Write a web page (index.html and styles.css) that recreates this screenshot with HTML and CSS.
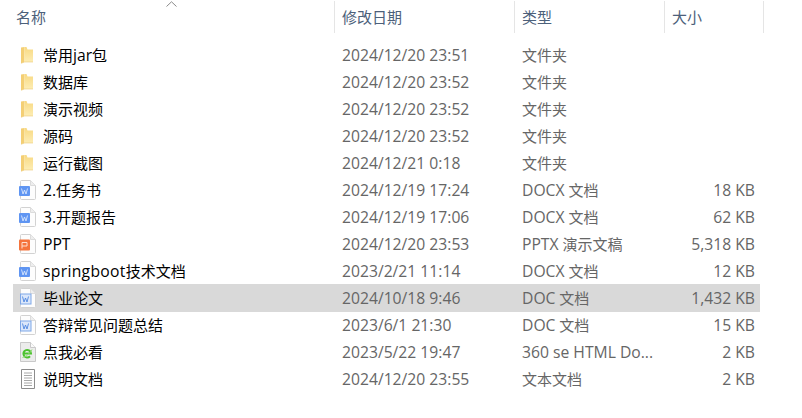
FILE: index.html
```html
<!DOCTYPE html>
<html lang="zh-CN">
<head>
<meta charset="utf-8">
<title>文件列表</title>
<link rel="stylesheet" href="styles.css">
</head>
<body>
<svg class="defs" width="0" height="0" aria-hidden="true">
  <defs>
    <linearGradient id="fg" x1="0" y1="0" x2="0" y2="1"><stop offset="0" stop-color="#f8d982"/><stop offset="1" stop-color="#fdedb4"/></linearGradient>
    <symbol id="folder" viewBox="0 0 18 20">
      <path d="M2 2.500 5.500 2v15l-3.500 1.300z" fill="#f4cf74"/>
      <path d="M5.500 2h2l1 2.500H14V17H5.500z" fill="url(#fg)"/>
      <path d="M2 18.300 5.500 17H14" fill="none" stroke="#ecca76" stroke-width=".6"/>
    </symbol>
    <symbol id="page" viewBox="0 0 18 20">
      <path d="M2.500.5h9l5 5v13a1 1 0 0 1-1 1h-13a1 1 0 0 1-1-1v-17a1 1 0 0 1 1-1z" fill="#fdfdfd" stroke="#d2d2d2"/>
      <path d="M11.500.5v5h5" fill="#eee" stroke="#dcdcdc"/>
    </symbol>
    <symbol id="word" viewBox="0 0 18 20">
      <use href="#page"/>
      <rect x="0" y="6" width="11" height="10" rx="1" fill="#5f95f2"/>
      <path d="M2.500 8.500 4 14l1.500-4L7 14l1.500-5.500" fill="none" stroke="#d7e5fd" stroke-width=".9"/>
    </symbol>
    <symbol id="doc" viewBox="0 0 18 20">
      <use href="#page"/>
      <rect x="1.500" y="6" width="10.500" height="10" fill="#dbe7fa" stroke="#7fa8e8"/>
      <path d="M3.500 8.500 5 14l1.500-4L8 14l1.500-5.500" fill="none" stroke="#4d86e0" stroke-width=".9"/>
    </symbol>
    <symbol id="ppt" viewBox="0 0 18 20">
      <use href="#page"/>
      <rect x="0" y="5.500" width="11" height="11" rx="1" fill="#f5743d"/>
      <path d="M3 14.500V8.500h5v3.500H3" fill="none" stroke="#fde0d2" stroke-width="1"/>
    </symbol>
    <symbol id="html" viewBox="0 0 18 20">
      <path d="M1.500.5h10l5 5v14h-15z" fill="#ececec" stroke="#c9c9c9"/>
      <path d="M11.500.5v5h5" fill="#fafafa" stroke="#c9c9c9"/>
      <path d="M4.500 11.500h7.500a3.800 3.800 0 1 0-1 2.800" fill="none" stroke="#4cc22f" stroke-width="2"/>
      <path d="M3.500 15.500c3-.5 7-3.500 9.500-8" fill="none" stroke="#8edb6f" stroke-width="1"/>
    </symbol>
    <symbol id="text" viewBox="0 0 18 20">
      <path d="M2.500.5h13v19h-13z" fill="#fff" stroke="#8c8c8c"/>
      <path d="M5 4h8M5 6.500h8M5 9h8M5 11.500h8M5 14h8M5 16.500h8" stroke="#a8a8a8"/>
    </symbol>
  </defs>
</svg>
<main class="explorer">
  <header class="head">
    <div class="hcell hname">名称<svg class="sort" width="11" height="6" viewBox="0 0 11 6"><path d="M.5 5.500 5.500 .8l5 4.700" fill="none" stroke="#8a8a8a"/></svg></div>
    <div class="hcell hdate">修改日期</div>
    <div class="hcell htype">类型</div>
    <div class="hcell hsize">大小</div>
  </header>
  <div class="rows">
    <div class="row"><span class="name"><svg class="icon"><use href="#folder"/></svg><span>常用<span class="lat">jar</span>包</span></span><span class="meta lat">2024/12/20 23:51</span><span class="meta">文件夹</span><span class="size"></span></div>
    <div class="row"><span class="name"><svg class="icon"><use href="#folder"/></svg>数据库</span><span class="meta lat">2024/12/20 23:52</span><span class="meta">文件夹</span><span class="size"></span></div>
    <div class="row"><span class="name"><svg class="icon"><use href="#folder"/></svg>演示视频</span><span class="meta lat">2024/12/20 23:52</span><span class="meta">文件夹</span><span class="size"></span></div>
    <div class="row"><span class="name"><svg class="icon"><use href="#folder"/></svg>源码</span><span class="meta lat">2024/12/20 23:52</span><span class="meta">文件夹</span><span class="size"></span></div>
    <div class="row"><span class="name"><svg class="icon"><use href="#folder"/></svg>运行截图</span><span class="meta lat">2024/12/21 0:18</span><span class="meta">文件夹</span><span class="size"></span></div>
    <div class="row"><span class="name"><svg class="icon"><use href="#word"/></svg><span><span class="lat">2.</span>任务书</span></span><span class="meta lat">2024/12/19 17:24</span><span class="meta"><span class="lat">DOCX</span> 文档</span><span class="size lat">18 KB</span></div>
    <div class="row"><span class="name"><svg class="icon"><use href="#word"/></svg><span><span class="lat">3.</span>开题报告</span></span><span class="meta lat">2024/12/19 17:06</span><span class="meta"><span class="lat">DOCX</span> 文档</span><span class="size lat">62 KB</span></div>
    <div class="row"><span class="name"><svg class="icon"><use href="#ppt"/></svg><span class="lat">PPT</span></span><span class="meta lat">2024/12/20 23:53</span><span class="meta"><span class="lat">PPTX</span> 演示文稿</span><span class="size lat">5,318 KB</span></div>
    <div class="row"><span class="name"><svg class="icon"><use href="#word"/></svg><span><span class="lat wide">springboot</span>技术文档</span></span><span class="meta lat">2023/2/21 11:14</span><span class="meta"><span class="lat">DOCX</span> 文档</span><span class="size lat">12 KB</span></div>
    <div class="row selected"><span class="name"><svg class="icon"><use href="#doc"/></svg>毕业论文</span><span class="meta lat">2024/10/18 9:46</span><span class="meta"><span class="lat">DOC</span> 文档</span><span class="size lat">1,432 KB</span></div>
    <div class="row"><span class="name"><svg class="icon"><use href="#doc"/></svg>答辩常见问题总结</span><span class="meta lat">2023/6/1 21:30</span><span class="meta"><span class="lat">DOC</span> 文档</span><span class="size lat">15 KB</span></div>
    <div class="row"><span class="name"><svg class="icon"><use href="#html"/></svg>点我必看</span><span class="meta lat">2023/5/22 19:47</span><span class="meta lat">360 se HTML Do...</span><span class="size lat">2 KB</span></div>
    <div class="row"><span class="name"><svg class="icon"><use href="#text"/></svg>说明文档</span><span class="meta lat">2024/12/20 23:55</span><span class="meta">文本文档</span><span class="size lat">2 KB</span></div>
  </div>
</main>
</body>
</html>
```

FILE: styles.css
```css
html, body {
  margin: 0;
  padding: 0;
  background: #fff;
}
body {
  width: 802px;
  height: 418px;
  overflow: hidden;
  font: 15px/27px "Open Sans", "Noto Sans CJK SC", sans-serif;
}
.defs {
  display: block;
  height: 0;
}
.explorer {
  padding-top: 1px;
}
.head {
  display: grid;
  grid-template-columns: 334px 180px 150px 100px;
  height: 32px;
  margin-bottom: 8px;
  color: #4c607a;
}
.hcell {
  position: relative;
  box-sizing: border-box;
  padding-left: 7px;
  border-left: 1px solid #e5e5e5;
  line-height: 33px;
  height: 32px;
}
.hname {
  border-left: 0;
  padding-left: 16px;
}
.hsize {
  border-right: 1px solid #e5e5e5;
}
.sort {
  position: absolute;
  left: 166px;
  top: 0;
}
.rows {
  margin-left: 13px;
  width: 747px;
}
.row {
  display: grid;
  grid-template-columns: 321px 180px 150px 1fr;
  height: 27px;
  line-height: 29px;
  color: #666;
  white-space: nowrap;
}
.row.selected {
  background: #d9d9d9;
  height: 28px;
  margin-bottom: -1px;
}
.name {
  display: flex;
  align-items: center;
  box-sizing: border-box;
  height: 27px;
  color: #000;
  padding: 2px 0 0 6px;
}
.icon {
  width: 18px;
  height: 20px;
  margin: 0 6px 2px 0;
  flex: none;
}
.lat {
  font-size: 15.7px;
}
.wide {
  letter-spacing: .3px;
}
.meta {
  padding-left: 8px;
}
.size {
  text-align: right;
  padding-right: 5px;
}
```
